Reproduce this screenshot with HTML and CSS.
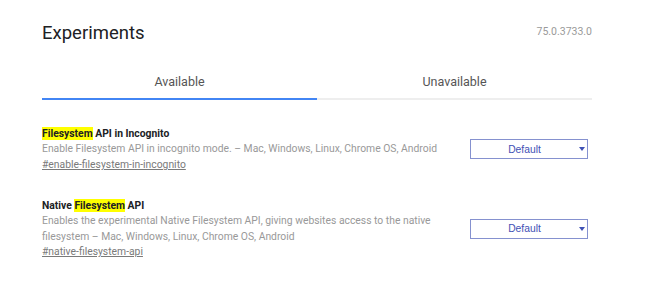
FILE: index.html
```html
<!DOCTYPE html>
<html lang="en">
<head>
<meta charset="utf-8">
<title>Experiments</title>
<link rel="stylesheet" href="styles.css">
</head>
<body>
<div class="page">
  <header class="header">
    <h1 class="title">Experiments</h1>
    <div class="version">75.0.3733.0</div>
  </header>
  <nav class="tabs">
    <div class="tab active">Available</div>
    <div class="tab">Unavailable</div>
  </nav>
  <section class="list">
    <div class="row">
      <div class="info">
        <div class="name"><span class="hl">Filesystem</span> API in Incognito</div>
        <div class="desc">Enable Filesystem API in incognito mode. – Mac, Windows, Linux, Chrome OS, Android</div>
        <a class="perma" href="#enable-filesystem-in-incognito">#enable-filesystem-in-incognito</a>
      </div>
      <div class="select"><span class="sel-text">Default</span><span class="sel-arrow"><i class="tri"></i></span></div>
    </div>
    <div class="row">
      <div class="info">
        <div class="name">Native <span class="hl">Filesystem</span> API</div>
        <div class="desc">Enables the experimental Native Filesystem API, giving websites access to the native filesystem – Mac, Windows, Linux, Chrome OS, Android</div>
        <a class="perma" href="#native-filesystem-api">#native-filesystem-api</a>
      </div>
      <div class="select"><span class="sel-text">Default</span><span class="sel-arrow"><i class="tri"></i></span></div>
    </div>
  </section>
</div>
</body>
</html>
```

FILE: styles.css
```css
html, body {
  margin: 0;
  padding: 0;
  background: #ffffff;
}

body {
  font-family: Roboto, "Noto Sans", Arial, sans-serif;
  color: #202124;
}

.page {
  width: 550px;
  padding: 20.7px 0 0 42px;
}

.header {
  display: flex;
  justify-content: space-between;
  align-items: flex-start;
  height: 24px;
}

.title {
  margin: 0;
  font-size: 18.5px;
  line-height: 24px;
  font-weight: 400;
  color: #202124;
}

.version {
  margin-top: 4.4px;
  font-size: 10.5px;
  line-height: 14px;
  color: #9a9a9a;
}

.tabs {
  display: flex;
  margin-top: 29px;
}

.tab {
  flex: 1;
  text-align: center;
  font-size: 12.5px;
  line-height: 16px;
  color: #555;
  padding-bottom: 8px;
  border-bottom: 2px solid #eeeeee;
}

.tab.active {
  border-bottom-color: #4285f4;
}

.list {
  margin-top: 26.3px;
}

.row {
  display: flex;
  align-items: center;
  justify-content: space-between;
}

.row + .row {
  margin-top: 25.3px;
}

.info {
  width: 410px;
  font-size: 10.35px;
  line-height: 15.5px;
}

.name {
  font-weight: 700;
  color: #202124;
}

.hl {
  background: #ffff00;
}

.desc {
  color: #999999;
}

.perma {
  color: #7a7a7a;
  text-decoration: underline;
}

.select {
  box-sizing: border-box;
  width: 118px;
  height: 20px;
  margin-right: 4px;
  border: 1px solid #8591cf;
  display: flex;
  align-items: center;
  padding-right: 1px;
  font-family: "Liberation Sans", Arial, sans-serif;
  font-size: 10.3px;
  color: #3f51b5;
}

.sel-text {
  flex: 1;
  text-align: center;
}

.sel-arrow {
  width: 8px;
  display: flex;
  justify-content: center;
  align-items: center;
}

.tri {
  display: block;
  width: 0;
  height: 0;
  border-left: 3px solid transparent;
  border-right: 3px solid transparent;
  border-top: 4px solid #3f51b5;
}
```
